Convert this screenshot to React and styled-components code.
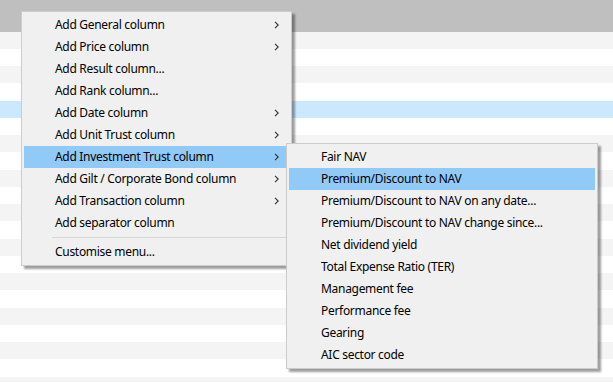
import styled, { createGlobalStyle } from "styled-components";

const GlobalStyle = createGlobalStyle`
  html, body {
    margin: 0;
    padding: 0;
    background: #ffffff;
  }
  body {
    font-family: "Segoe UI", "Noto Sans", "Open Sans", sans-serif;
    font-size: 12px;
    color: #000000;
  }
`;

const Page = styled.div`
  position: relative;
  width: 613px;
  height: 382px;
  overflow: hidden;
  background: #ffffff;
`;

const Header = styled.div`
  height: 31.5px;
  background: #bfbfbf;
`;

const Row = styled.div`
  height: 17.25px;
  background: ${(p) => (p.$selected ? "#cce8ff" : p.$odd ? "#ffffff" : "#f4f4f4")};
`;

const Menu = styled.div`
  position: absolute;
  left: ${(p) => p.$left}px;
  top: ${(p) => p.$top}px;
  width: ${(p) => p.$width}px;
  box-sizing: border-box;
  padding: 2px;
  background: #f0f0f0;
  border: 1px solid #cccccc;
  box-shadow: 3px 3px 2px rgba(0, 0, 0, 0.38);
  display: flex;
  flex-direction: column;
`;

const Item = styled.div`
  height: 22px;
  display: flex;
  align-items: center;
  padding-left: ${(p) => p.$indent}px;
  padding-right: 9px;
  background: ${(p) => (p.$active ? "#91c9f7" : "transparent")};
  white-space: nowrap;
`;

const Label = styled.span`
  flex: 1;
  line-height: 22px;
  letter-spacing: -0.3px;
`;

const Separator = styled.div`
  height: 1px;
  margin: 3px 3px 3px 28px;
  background: #d7d7d7;
`;

const Chevron = () => (
  <svg width="6" height="8" viewBox="0 0 6 8">
    <polyline
      points="1,0.8 4.2,4 1,7.2"
      fill="none"
      stroke="#333333"
      strokeWidth="1.1"
    />
  </svg>
);

const mainItems = [
  { label: "Add General column", sub: true },
  { label: "Add Price column", sub: true },
  { label: "Add Result column..." },
  { label: "Add Rank column..." },
  { label: "Add Date column", sub: true },
  { label: "Add Unit Trust column", sub: true },
  { label: "Add Investment Trust column", sub: true, active: true },
  { label: "Add Gilt / Corporate Bond column", sub: true },
  { label: "Add Transaction column", sub: true },
  { label: "Add separator column" },
];

const subItems = [
  "Fair NAV",
  "Premium/Discount to NAV",
  "Premium/Discount to NAV on any date...",
  "Premium/Discount to NAV change since...",
  "Net dividend yield",
  "Total Expense Ratio (TER)",
  "Management fee",
  "Performance fee",
  "Gearing",
  "AIC sector code",
];

const App = () => {
  const rows = Array.from({ length: 21 }, (_, i) => i);

  return (
    <Page>
      <GlobalStyle />
      <Header />
      {rows.map((i) => (
        <Row key={i} $odd={i % 2 === 1} $selected={i === 4} />
      ))}

      <Menu $left={21} $top={11} $width={271}>
        {mainItems.map((it) => (
          <Item key={it.label} $indent={31} $active={it.active}>
            <Label>{it.label}</Label>
            {it.sub && <Chevron />}
          </Item>
        ))}
        <Separator />
        <Item $indent={31}>
          <Label>Customise menu...</Label>
        </Item>
      </Menu>

      <Menu $left={286} $top={143} $width={312}>
        {subItems.map((label, i) => (
          <Item key={label} $indent={32} $active={i === 1}>
            <Label>{label}</Label>
          </Item>
        ))}
      </Menu>
    </Page>
  );
};

export default App;
